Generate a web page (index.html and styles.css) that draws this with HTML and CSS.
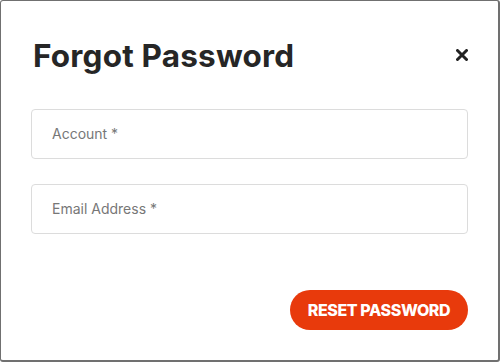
FILE: index.html
```html
<!DOCTYPE html>
<html>
<head>
<meta charset="utf-8">
<link rel="stylesheet" href="styles.css">
</head>
<body>
<div class="dialog">
  <div class="header">
    <h1 class="title">Forgot Password</h1>
    <button class="close" aria-label="Close">
      <svg width="12" height="12" viewBox="0 0 12 12"><path d="M1.5 1.5 L10.5 10.5 M10.5 1.5 L1.5 10.5" stroke="#222" stroke-width="3" stroke-linecap="round"/></svg>
    </button>
  </div>
  <form class="form">
    <input class="field" type="text" placeholder="Account *">
    <input class="field" type="email" placeholder="Email Address *">
    <div class="actions">
      <button type="button" class="submit">RESET PASSWORD</button>
    </div>
  </form>
</div>
</body>
</html>
```
FILE: styles.css
```css
* { box-sizing: border-box; }
html, body { margin: 0; padding: 0; background: #fff; }
.dialog {
  width: 500px;
  height: 362px;
  border: 1px solid #707070;
  border-right-width: 2px;
  border-bottom-width: 2px;
  border-radius: 3px;
  padding: 36px 30px 0 30px;
  font-family: Inter, "Liberation Sans", sans-serif;
}
.header {
  display: flex;
  align-items: center;
  justify-content: space-between;
  height: 36px;
}
.title {
  margin: 0 0 0 2px;
  font-size: 31.5px;
  font-weight: 700;
  color: #262626;
  letter-spacing: 0.2px;
}
.close {
  border: 0;
  background: none;
  padding: 0;
  width: 12px;
  height: 12px;
  margin-right: 0;
  display: flex;
}
.form {
  display: flex;
  flex-direction: column;
  gap: 25px;
  margin-top: 36px;
}
.field {
  width: 437px;
  height: 50px;
  border: 1px solid #dcdcdc;
  border-radius: 4px;
  padding: 0 20px 2px;
  font-family: Inter, "Liberation Sans", sans-serif;
  font-size: 14px;
  color: #333;
  outline: none;
}
.field::placeholder { color: #777; }
.actions {
  display: flex;
  justify-content: flex-end;
  width: 437px;
  margin-top: 31px;
}
.submit {
  width: 178px;
  height: 40px;
  border: 0;
  border-radius: 20px;
  background: #e83a0c;
  color: #fff;
  font-family: Inter, "Liberation Sans", sans-serif;
  font-weight: 800;
  font-size: 16px;
  letter-spacing: -0.4px;
}
```
